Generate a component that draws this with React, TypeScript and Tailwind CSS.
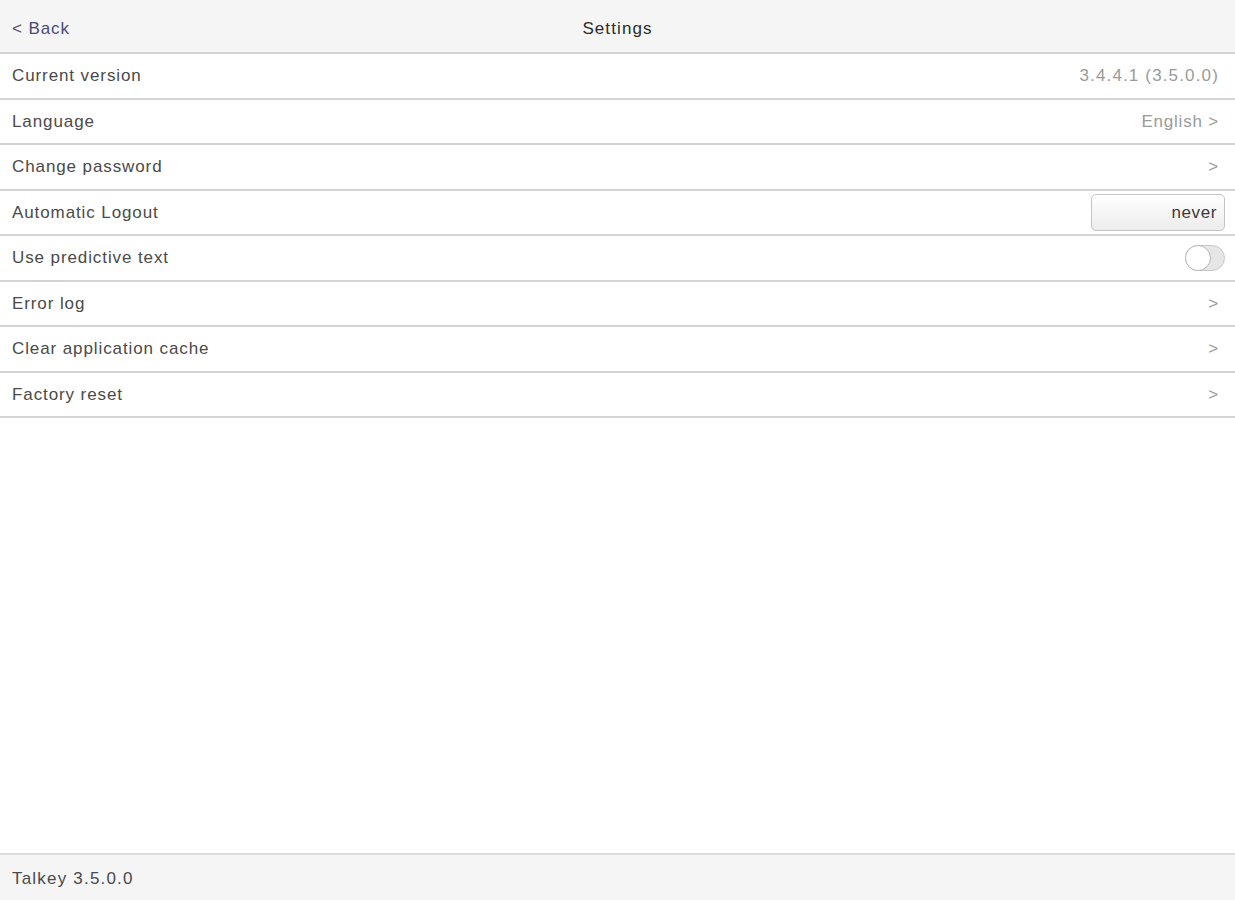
import React, { useState } from 'react';

type Row = {
  label: string;
  value?: string;
  chevron?: boolean;
  kind?: 'text' | 'select' | 'toggle';
};

const rows: Row[] = [
  { label: 'Current version', value: '3.4.4.1 (3.5.0.0)' },
  { label: 'Language', value: 'English', chevron: true },
  { label: 'Change password', chevron: true },
  { label: 'Automatic Logout', kind: 'select', value: 'never' },
  { label: 'Use predictive text', kind: 'toggle' },
  { label: 'Error log', chevron: true },
  { label: 'Clear application cache', chevron: true },
  { label: 'Factory reset', chevron: true },
];

const Toggle: React.FC<{ on: boolean; onChange: (v: boolean) => void }> = ({ on, onChange }) => (
  <button
    onClick={() => onChange(!on)}
    className={`relative w-[40px] h-[26px] rounded-full border border-[#c8c8c8] ${on ? 'bg-[#4cd964]' : 'bg-[#e6e6e6]'}`}
  >
    <span
      className={`absolute top-[-1px] w-[26px] h-[26px] rounded-full bg-white border border-[#b8b8b8] ${on ? 'right-[-1px]' : 'left-[-1px]'}`}
    ></span>
  </button>
);

export default function App() {
  const [predictive, setPredictive] = useState(false);

  return (
    <div
      className="w-full h-screen flex flex-col bg-white text-[#4a4a4a] text-[17px]"
      style={{ fontFamily: '"Liberation Sans", Arial, sans-serif' }}
    >
      {/* Header */}
      <div className="relative h-[54px] shrink-0 flex items-center pt-[6px] bg-[#f5f5f5] border-b-2 border-[#d4d4d4]">
        <span className="pl-3 text-[#4a4a78] tracking-[0.9px]">&lt; Back</span>
        <span className="absolute left-0 right-0 text-center text-[#2b2b2b] pointer-events-none tracking-[1.1px]">
          Settings
        </span>
      </div>

      {/* Rows */}
      <div className="flex flex-col">
        {rows.map((row) => (
          <div
            key={row.label}
            className="h-[45.5px] flex items-center justify-between pl-3 pr-[10px] border-b-2 border-[#d4d4d4] tracking-[0.9px]"
          >
            <span>{row.label}</span>
            {row.kind === 'select' ? (
              <div className="w-[134px] h-[37px] rounded-[5px] border border-[#c4c4c4] bg-gradient-to-b from-white to-[#ececec] flex items-center justify-end pr-[7px] text-[#3a3a3a] tracking-[0.6px]">
                never
              </div>
            ) : row.kind === 'toggle' ? (
              <Toggle on={predictive} onChange={setPredictive} />
            ) : (
              <span className={`text-[#9a9a9a] pr-[6px] ${row.chevron ? 'tracking-[0.8px]' : 'tracking-[1.15px]'}`}>
                {row.value}
                {row.value && row.chevron ? ' ' : ''}
                {row.chevron ? '>' : ''}
              </span>
            )}
          </div>
        ))}
      </div>

      <div className="flex-1"></div>

      {/* Footer */}
      <div className="h-[47px] shrink-0 flex items-center pl-3 pt-[3px] bg-[#f5f5f5] border-t-2 border-[#dcdcdc] tracking-[1.2px] text-[#4a4a4a]">
        Talkey 3.5.0.0
      </div>
    </div>
  );
}
